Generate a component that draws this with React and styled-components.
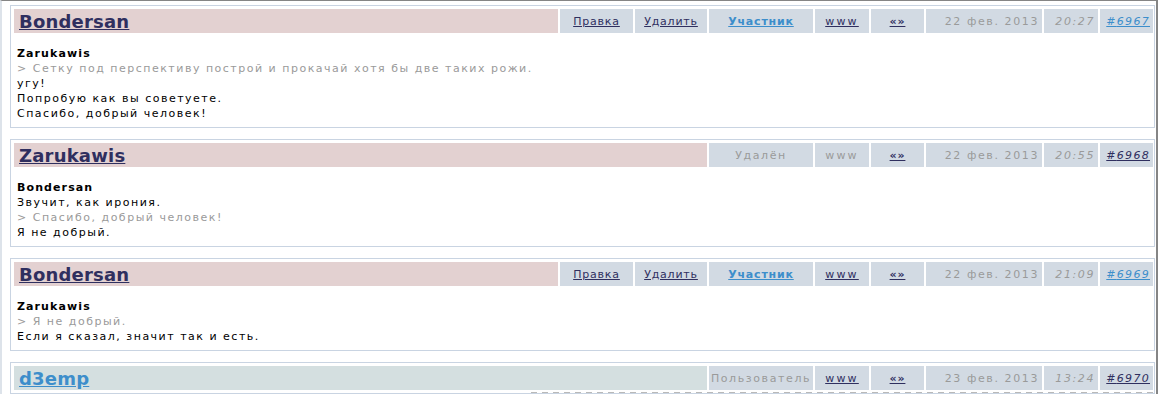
import React from "react";
import styled, { createGlobalStyle, css } from "styled-components";

const Global = createGlobalStyle`
  html, body { margin: 0; padding: 0; background: #fff; }
  body { font-family: "DejaVu Sans", Verdana, sans-serif; font-size: 11px; color: #000; }
`;

const NAVY = "#2f2f5f";
const BLUE = "#3d8ecb";
const GRAY = "#9a9a9a";
const CELL = "#d2dae3";

const Page = styled.div`
  width: 1158px;
  box-sizing: border-box;
  border-top: 1px solid #858585;
  border-right: 2px solid #858585;
  border-left: 2px solid #dde3ea;
  padding: 4px 1px 0 8px;
  display: flex;
  flex-direction: column;
  gap: 11px;
`;

const Post = styled.article`
  border: 1px solid #c9d4e2;
  padding: 3px 1px 0 3px;
`;

const Header = styled.div`
  display: flex;
  gap: 2px;
  height: 24px;
`;

const NameCell = styled.div`
  flex: 1;
  display: flex;
  align-items: center;
  padding-left: 5px;
  background: ${(p) => (p.$guest ? "#d4dfe0" : "#e3d1d1")};
`;

const NameLink = styled.a`
  font-size: 18px;
  font-weight: bold;
  color: ${(p) => (p.$guest ? BLUE : NAVY)};
  text-decoration: underline;
  letter-spacing: 0.2px;
`;

const Cell = styled.div`
  width: ${(p) => p.$w}px;
  box-sizing: border-box;
  background: ${CELL};
  display: flex;
  align-items: center;
  justify-content: ${(p) => (p.$right ? "flex-end" : "center")};
  padding: 0 ${(p) => (p.$right ? 3 : 0)}px 0 0;
  letter-spacing: 0.8px;
  white-space: nowrap;
`;

const ActLink = styled.a`
  color: ${NAVY};
  text-decoration: underline;
  ${(p) =>
    p.$member &&
    css`
      color: ${BLUE};
      font-weight: bold;
    `}
  ${(p) => p.$bold && css`font-weight: bold;`}
  ${(p) => p.$wide && css`letter-spacing: 2.2px;`}
`;

const Muted = styled.span`
  color: ${GRAY};
  letter-spacing: ${(p) => (p.$wide ? 2.2 : 1.6)}px;
  ${(p) => p.$italic && css`font-style: italic;`}
`;

const IdLink = styled.a`
  font-style: italic;
  text-decoration: underline;
  letter-spacing: 1.3px;
  color: ${(p) => (p.$visited ? NAVY : BLUE)};
`;

const Body = styled.div`
  padding: 13px 0 6px 3px;
  line-height: 15px;
  letter-spacing: 1.5px;
`;

const Line = styled.div`
  ${(p) => p.$kind === "author" && css`font-weight: bold; letter-spacing: 1.1px;`}
  ${(p) => p.$kind === "quote" && css`color: ${GRAY};`}
`;

const RuleBody = styled.div`
  padding-top: 2px;
  display: flex;
  justify-content: flex-end;
`;

const DashedRule = styled.div`
  width: 622px;
  height: 1px;
  background-image: repeating-linear-gradient(
    to right,
    #b9b9b9 0 6px,
    transparent 6px 11px
  );
`;

const posts = [
  {
    author: "Bondersan",
    own: true,
    role: "member",
    www: true,
    date: "22 фев. 2013",
    time: "20:27",
    id: "6967",
    visited: false,
    lines: [
      ["author", "Zarukawis"],
      ["quote", "> Сетку под перспективу построй и прокачай хотя бы две таких рожи."],
      ["text", "угу!"],
      ["text", "Попробую как вы советуете."],
      ["text", "Спасибо, добрый человек!"],
    ],
  },
  {
    author: "Zarukawis",
    own: false,
    role: "deleted",
    www: false,
    date: "22 фев. 2013",
    time: "20:55",
    id: "6968",
    visited: true,
    lines: [
      ["author", "Bondersan"],
      ["text", "Звучит, как ирония."],
      ["quote", "> Спасибо, добрый человек!"],
      ["text", "Я не добрый."],
    ],
  },
  {
    author: "Bondersan",
    own: true,
    role: "member",
    www: true,
    date: "22 фев. 2013",
    time: "21:09",
    id: "6969",
    visited: false,
    lines: [
      ["author", "Zarukawis"],
      ["quote", "> Я не добрый."],
      ["text", "Если я сказал, значит так и есть."],
    ],
  },
  {
    author: "d3emp",
    guest: true,
    own: false,
    role: "user",
    www: true,
    date: "23 фев. 2013",
    time: "13:24",
    id: "6970",
    visited: true,
    rule: true,
  },
];

function RoleCell({ role }) {
  if (role === "member")
    return (
      <Cell $w={104}>
        <ActLink href="#" $member>
          Участник
        </ActLink>
      </Cell>
    );
  return (
    <Cell $w={104}>
      <Muted>{role === "deleted" ? "Удалён" : "Пользователь"}</Muted>
    </Cell>
  );
}

function PostItem({ p }) {
  return (
    <Post>
      <Header>
        <NameCell $guest={p.guest}>
          <NameLink href="#" $guest={p.guest}>
            {p.author}
          </NameLink>
        </NameCell>
        {p.own && (
          <>
            <Cell $w={73}>
              <ActLink href="#">Правка</ActLink>
            </Cell>
            <Cell $w={72}>
              <ActLink href="#">Удалить</ActLink>
            </Cell>
          </>
        )}
        <RoleCell role={p.role} />
        <Cell $w={54}>
          {p.www ? (
            <ActLink href="#" $wide>
              www
            </ActLink>
          ) : (
            <Muted $wide>www</Muted>
          )}
        </Cell>
        <Cell $w={53}>
          <ActLink href="#" $bold>
            «»
          </ActLink>
        </Cell>
        <Cell $w={116} $right>
          <Muted>{p.date}</Muted>
        </Cell>
        <Cell $w={54} $right>
          <Muted $italic>{p.time}</Muted>
        </Cell>
        <Cell $w={53} $right>
          <IdLink href="#" $visited={p.visited}>
            #{p.id}
          </IdLink>
        </Cell>
      </Header>
      {p.rule ? (
        <RuleBody>
          <DashedRule />
        </RuleBody>
      ) : (
        <Body>
          {p.lines.map(([k, t], i) => (
            <Line key={i} $kind={k}>
              {t}
            </Line>
          ))}
        </Body>
      )}
    </Post>
  );
}

export default function App() {
  return (
    <>
      <Global />
      <Page>
        {posts.map((p) => (
          <PostItem key={p.id} p={p} />
        ))}
      </Page>
    </>
  );
}
